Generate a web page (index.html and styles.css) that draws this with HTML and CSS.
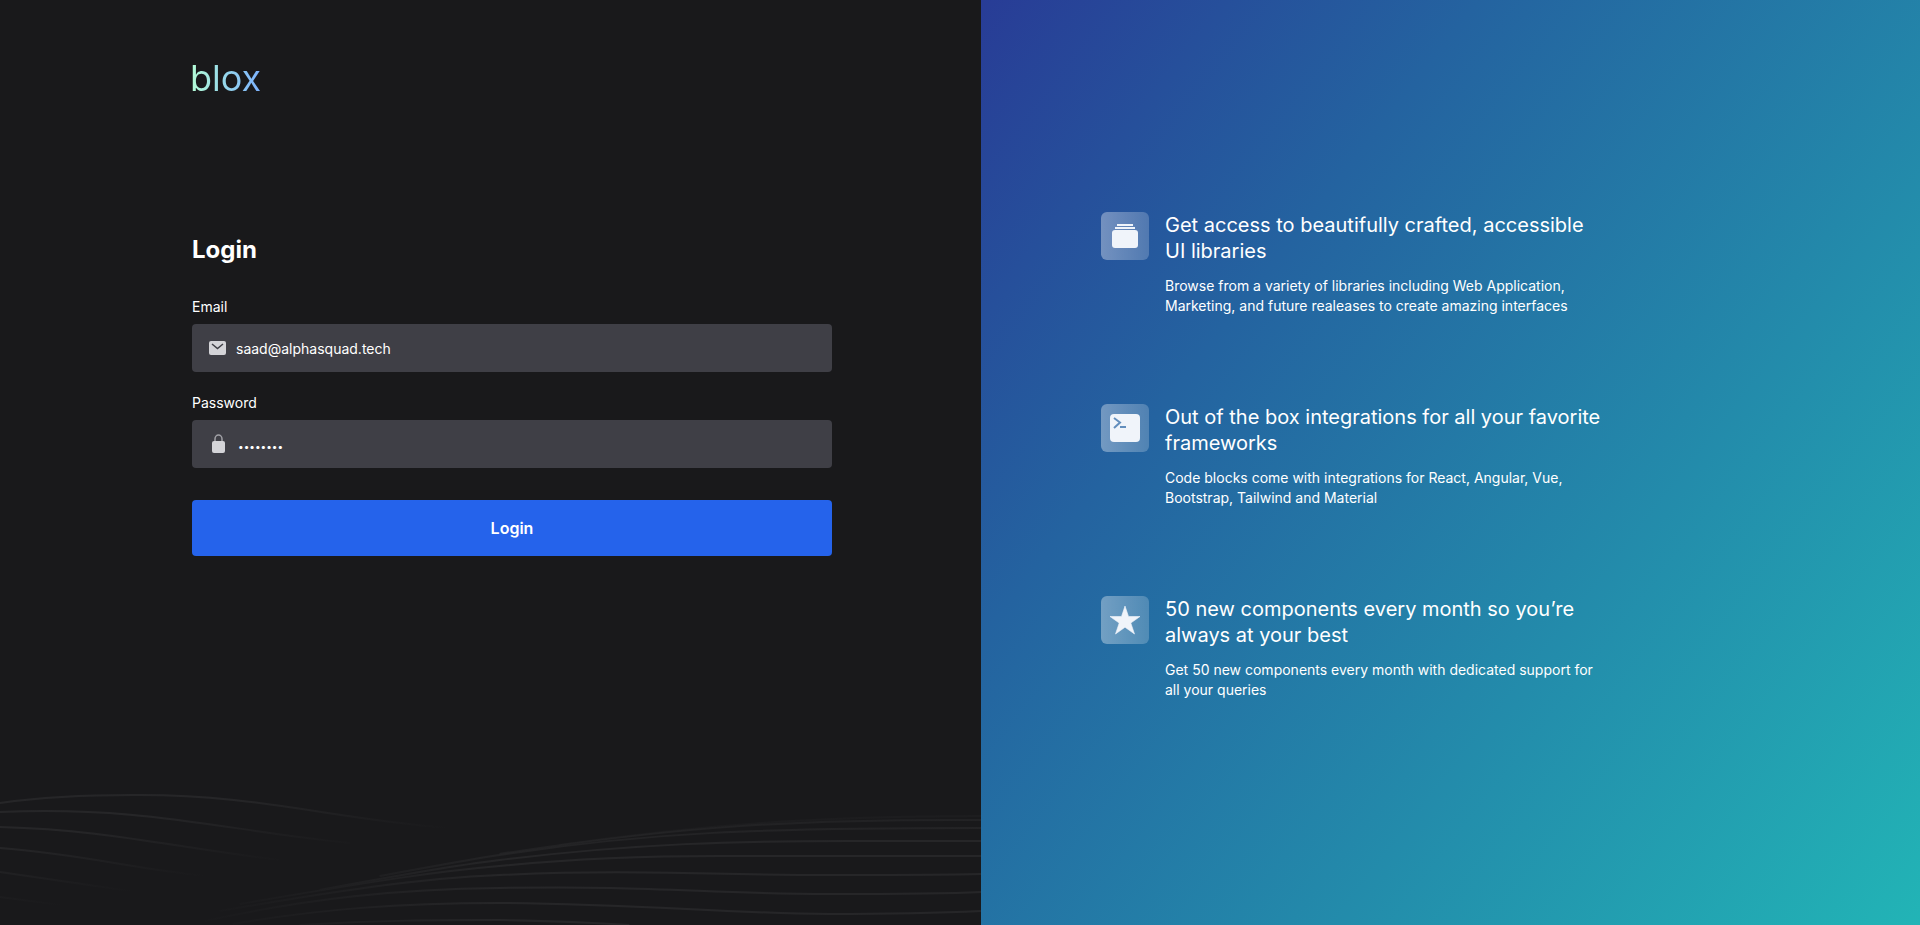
FILE: index.html
```html
<!DOCTYPE html>
<html lang="en">
<head>
<meta charset="utf-8">
<title>blox – Login</title>
<link rel="stylesheet" href="styles.css">
</head>
<body>
<div class="page">
  <main class="panel">
    <svg class="waves" viewBox="0 0 982 155" preserveAspectRatio="none" aria-hidden="true">
      <defs>
        <linearGradient id="fadeRight" gradientUnits="userSpaceOnUse" x1="50" y1="64" x2="64" y2="135">
          <stop offset="0" stop-color="#262628"/><stop offset="1" stop-color="#19191b"/>
        </linearGradient>
        <linearGradient id="fadeLeft" gradientUnits="userSpaceOnUse" x1="200" y1="110" x2="480" y2="190">
          <stop offset="0" stop-color="#19191b"/><stop offset="1" stop-color="#262628"/>
        </linearGradient>
      </defs>
      <g fill="none" stroke="url(#fadeRight)" stroke-width="2">
        <path d="M0 33C50 26 100 25 133 25C260 24 330 49 450 58"/>
        <path d="M0 42C150 36 220 60 350 73"/>
        <path d="M0 57C110 60 170 77 280 90"/>
        <path d="M0 78C80 84 130 98 205 106"/>
        <path d="M0 102L130 121"/>
        <path d="M0 127L60 135"/>
      </g>
      <g fill="none" stroke="url(#fadeLeft)" stroke-width="2">
        <path stroke-opacity=".3" d="M560 75C700 55 820 46 982 46"/>
        <path stroke-opacity=".7" d="M500 84C680 56 800 49 982 50"/>
        <path stroke-opacity=".8" d="M380 106C420 99 460 91 500 85C650 62 760 58 982 58"/>
        <path d="M320 120C400 105 450 96 500 90C640 73 740 71 850 71H982"/>
        <path d="M240 134C380 110 440 101 500 96C600 86 680 86 720 86H982"/>
        <path d="M220 141C330 122 420 108 500 105C640 99 700 105 830 105C890 105 940 105 982 104"/>
        <path d="M205 151C310 128 400 119 500 118C650 115 710 124 830 124C890 124 940 124 982 122"/>
        <path d="M233 154C320 139 400 133 500 133C640 134 720 143 830 144C890 144 940 143 982 141"/>
        <path d="M300 155C380 150 440 150 500 150C560 151 600 153 630 155"/>
      </g>
    </svg>
    <div class="content">
      <span class="logo">blox</span>
      <form class="form">
        <h1 class="title">Login</h1>
        <label class="label" for="email">Email</label>
        <div class="field">
          <svg class="field-icon" viewBox="0 0 18 18" aria-hidden="true">
            <rect x="1" y="2" width="17" height="14" rx="2" fill="#d4d4d8"/>
            <path d="M4 5l5.500 4.500L15 5" fill="none" stroke="#3f3f46" stroke-width="1.500"/>
          </svg>
          <input class="input" id="email" type="email" value="saad@alphasquad.tech">
        </div>
        <label class="label" for="password">Password</label>
        <div class="field">
          <svg class="field-icon lock" viewBox="0 0 20 20" aria-hidden="true">
            <path d="M7 9V5a3.500 4 0 0 1 7 0v4" fill="none" stroke="#a1a1a6" stroke-width="1.500"/>
            <rect x="4" y="7" width="13" height="12" rx="2" fill="#d4d4d8"/>
          </svg>
          <input class="input secret" id="password" type="password" value="password">
        </div>
        <button class="submit" type="submit">Login</button>
      </form>
    </div>
  </main>
  <aside class="features">
    <section class="feature">
      <svg class="badge" viewBox="0 0 48 48" aria-hidden="true">
        <defs><linearGradient id="glass"><stop offset="0" stop-color="#fff" stop-opacity=".36"/><stop offset="1" stop-color="#fff" stop-opacity=".2"/></linearGradient></defs>
        <rect width="48" height="48" rx="6" fill="url(#glass)"/>
        <g fill="#f0f4fa"><rect x="11" y="18" width="26" height="18" rx="3"/><rect x="14" y="15" width="20" height="2"/><rect x="16" y="12" width="16" height="2"/></g>
      </svg>
      <div class="feature-text">
        <h2 class="feature-title">Get access to beautifully crafted, accessible UI libraries</h2>
        <p class="feature-body">Browse from a variety of libraries including Web Application, Marketing, and future realeases to create amazing interfaces</p>
      </div>
    </section>
    <section class="feature">
      <svg class="badge" viewBox="0 0 48 48" aria-hidden="true">
        <rect width="48" height="48" rx="6" fill="url(#glass)"/>
        <rect x="9" y="10" width="30" height="28" rx="4" fill="#f0f4fa"/>
        <path d="M13 14l6 4.500L13 24M19 23h6" fill="none" stroke="#638ebd" stroke-width="2"/>
      </svg>
      <div class="feature-text">
        <h2 class="feature-title">Out of the box integrations for all your favorite frameworks</h2>
        <p class="feature-body">Code blocks come with integrations for React, Angular, Vue, Bootstrap, Tailwind and Material</p>
      </div>
    </section>
    <section class="feature">
      <svg class="badge" viewBox="0 0 48 48" aria-hidden="true">
        <rect width="48" height="48" rx="6" fill="url(#glass)"/>
        <path d="M24 10l3.500 10.500H39l-9.200 6.500L33.500 38 24 31.200 14.500 38l3.700-11L9 20.500h11.500z" fill="#f0f4fa" stroke="#f0f4fa" stroke-width=".6" stroke-linejoin="round"/>
      </svg>
      <div class="feature-text">
        <h2 class="feature-title">50 new components every month so you’re always at your best</h2>
        <p class="feature-body">Get 50 new components every month with dedicated support for all your queries</p>
      </div>
    </section>
  </aside>
</div>
</body>
</html>
```
FILE: styles.css
```css
* { box-sizing: border-box; }
body { margin: 0; font-family: Inter, "Open Sans", sans-serif; color: #fff; background: #19191b; }
.page { display: grid; grid-template-columns: 981fr 939fr; min-height: 100vh; }
.panel { position: relative; padding: 54px 149px 56px 190px; }
.waves { position: absolute; left: 0; bottom: 0; width: 100%; height: 155px; }
.content { position: relative; max-width: 642px; }
.logo {
  display: block; width: max-content; font-size: 36px; line-height: 48px; font-weight: 400;
  background: linear-gradient(90deg, #b4fdd5, #93d3ee 55%, #7cb2ff);
  -webkit-background-clip: text; background-clip: text; color: transparent;
}
.form { display: flex; flex-direction: column; margin: 131px 0 0 2px; }
.title { margin: 0; font-size: 24px; line-height: 34px; font-weight: 700; }
.label { margin-top: 30px; font-size: 14px; line-height: 20px; }
.field { display: flex; align-items: center; gap: 10px; height: 48px; margin-top: 7px; padding: 0 16px; border-radius: 4px; background: #3f3f46; }
.field + .label { margin-top: 21px; }
.field-icon { flex: none; width: 18px; height: 18px; }
.lock { width: 20px; height: 20px; }
.input { flex: 1; min-width: 0; padding: 2px 0 0; border: 0; outline: 0; background: transparent; color: #fff; font: inherit; font-size: 14px; line-height: 20px; }
.secret { padding-top: 4px; font-size: 10px; }
.submit { height: 56px; margin-top: 32px; border: 0; border-radius: 4px; background: #2563eb; color: #fff; font: inherit; font-size: 16px; font-weight: 600; }
.features {
  display: flex; flex-direction: column; gap: 88px; padding: 212px 120px 56px;
  background: linear-gradient(128deg, #283c96, #2463a0 30%, #22b4b6);
}
.feature { display: flex; align-items: flex-start; gap: 16px; max-width: 504px; }
.badge { flex: none; width: 48px; height: 48px; }
.feature-title { margin: 0; font-size: 20px; line-height: 26px; font-weight: 400; }
.feature-body { margin: 12px 0 0; font-size: 14px; line-height: 20px; }
```
